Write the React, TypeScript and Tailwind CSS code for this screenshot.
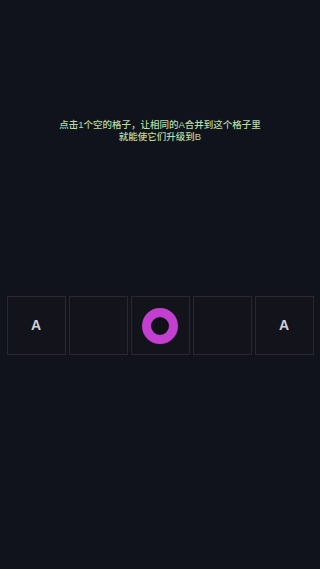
import React from "react";

const cells = ["A", "", "ring", "", "A"];

export default function App() {
  return (
    <div
      className="w-[320px] h-[569px] bg-[#10131b] flex flex-col items-center overflow-hidden"
      style={{ fontFamily: '"Liberation Sans", "Noto Sans CJK SC", sans-serif' }}
    >
      <div className="mt-[119px] text-center text-[9.5px] leading-[12px] font-medium text-[#b8dca4]">
        <div>点击1个空的格子，让相同的A合并到这个格子里</div>
        <div>就能使它们升级到B</div>
      </div>
      <div className="mt-[153px] flex gap-[3px]">
        {cells.map((c, i) => (
          <div
            key={i}
            className="w-[59px] h-[59px] border border-[#2c2633] bg-[#13141b] flex items-center justify-center"
          >
            {c === "A" && (
              <span className="text-[14px] font-bold text-[#d2d2d6]">A</span>
            )}
            {c === "ring" && (
              <div className="w-[36px] h-[36px] rounded-full border-[9.5px] border-[#c23fcf] bg-[#101018]" />
            )}
          </div>
        ))}
      </div>
    </div>
  );
}
